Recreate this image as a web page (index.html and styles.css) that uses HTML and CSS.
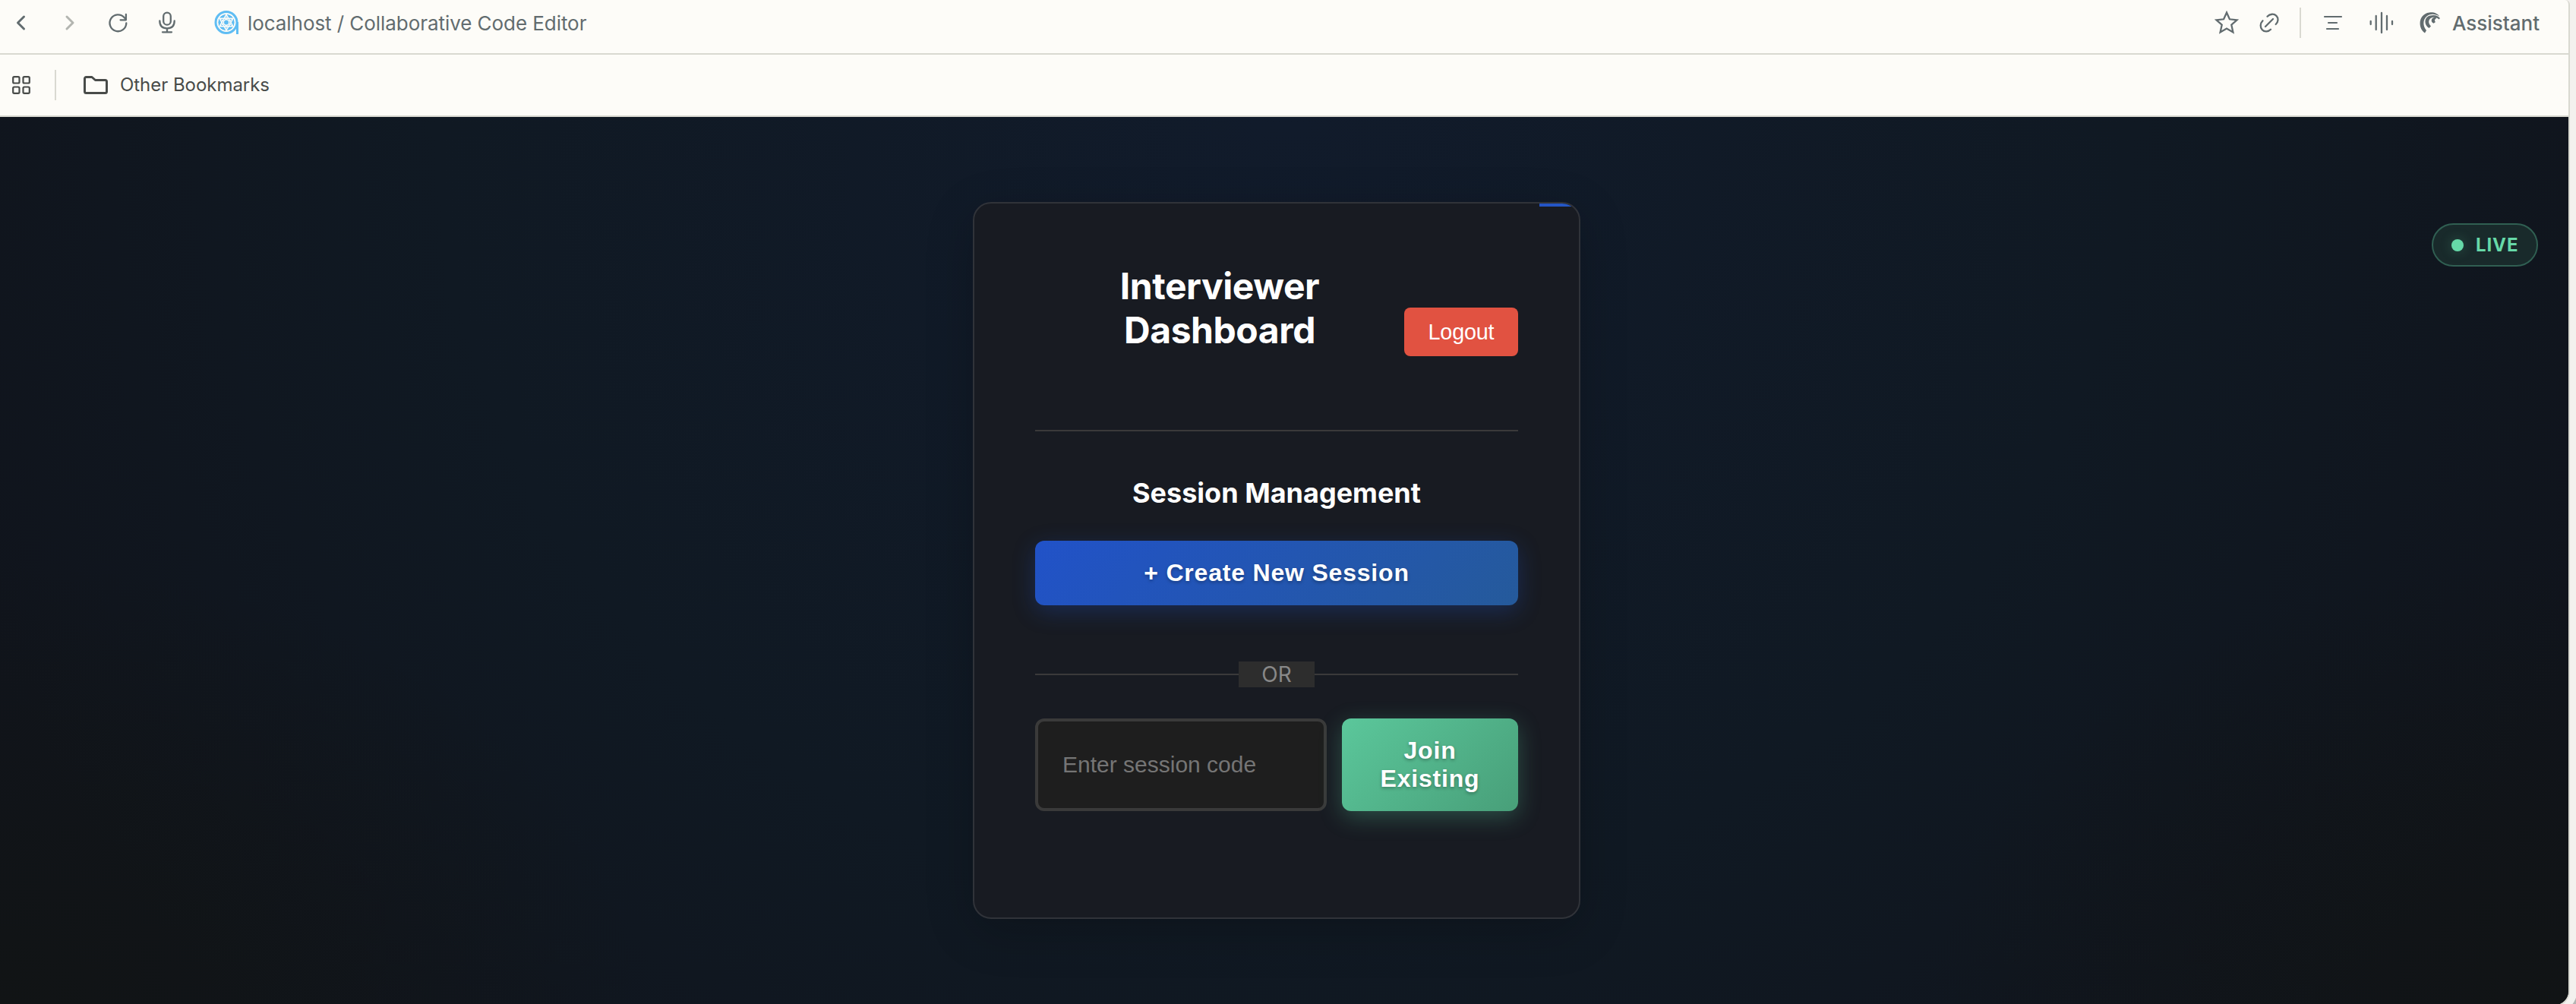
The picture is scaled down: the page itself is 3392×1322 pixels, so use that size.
FILE: index.html
```html
<!DOCTYPE html>
<html lang="en">
<head>
<meta charset="utf-8">
<title>Collaborative Code Editor</title>
<link rel="stylesheet" href="styles.css">
</head>
<body>
<div class="shell">
  <div class="window">
    <header class="toolbar">
      <nav class="nav">
        <svg class="icon" width="32" height="32" viewBox="0 0 32 32"><path d="M21.500 8 13.500 16 21.500 24" stroke-width="3"/></svg>
        <svg class="icon faded" width="32" height="32" viewBox="0 0 32 32"><path d="M14 8 22 16 14 24" stroke-width="3"/></svg>
        <svg class="icon" width="32" height="32" viewBox="0 0 32 32"><path d="M28.300 16.500A10.900 10.900 0 1 1 25.500 9L27.500 11M27.900 5V12.300H20.600" stroke-width="2.300"/></svg>
        <svg class="icon" width="32" height="32" viewBox="0 0 32 32"><rect x="13.200" y="2.700" width="9.600" height="16" rx="4.800" stroke-width="2.300"/><path d="M8.300 13.500C8.300 20 12 23.300 18 23.300S27.700 20 27.700 13.500M18 23.300V28M12 28.300H24" stroke-width="2.300"/></svg>
      </nav>
      <div class="address">
        <svg class="favicon" width="34" height="34" viewBox="0 0 34 34">
          <circle cx="16" cy="16.500" r="14" fill="none" stroke="#5fbdf3" stroke-width="3"/>
          <path d="M30.500 16V32" stroke="#5fbdf3" stroke-width="3"/>
          <circle cx="16" cy="16.500" r="10.800" fill="#5fbdf3"/>
          <g fill="none" stroke="#fdfcf8" stroke-width="1.500">
            <path d="M16 6 25 21.700H7ZM16 27 7 11.300H25Z"/>
            <circle cx="16" cy="16.500" r="3.700"/>
            <circle cx="16" cy="16.500" r="11.300" stroke-width="1"/>
            <path d="M16 6V12M16 21V27M7 11.300 12 14.500M20 18.500 25 21.700M7 21.700 12 18.500M20 14.500 25 11.300" stroke-width="1"/>
          </g>
        </svg>
        <span class="address-text">localhost / Collaborative Code Editor</span>
      </div>
      <div class="tools">
        <svg class="icon" width="34" height="34" viewBox="0 0 34 34"><path d="M17 3.500 20.900 12.300 30.500 13.300 23.300 19.700 25.400 29.400 17 24.500 8.600 29.400 10.700 19.700 3.500 13.300 13.100 12.300Z" stroke-width="2.300" stroke-linejoin="miter"/></svg>
        <svg class="icon link" width="26" height="26" viewBox="0 0 26 26"><path d="M10.500 4.700C14 .9 19.500.9 22.500 3.800S25.100 12 21.700 15M4.500 10.300C.9 14 .9 19 3.800 22.200S12 25 15 21.800M8 18 18 8" stroke-width="2.300"/></svg>
        <span class="rule"></span>
        <svg class="icon lines" width="26" height="20" viewBox="0 0 26 20"><path d="M2 2H24M7 10H18M5 18H20" stroke-width="2.200"/></svg>
        <svg class="icon wave" width="32" height="30" viewBox="0 0 32 30"><path d="M1.700 13V17M8.700 6V24M16 2V28M23 6V24M30 13V17" stroke-width="2.300"/></svg>
        <span class="assistant">
          <svg class="swirl" width="30" height="30" viewBox="0 0 30 30"><path d="M8 28.500C-2 22 -.5 3 14 1.500 20 .8 25 3 27 6.500 22 3.500 16 2.500 11 6 5 10.500 5 19 10 25Z"/><path d="M13.500 22C6.500 18 6.500 7.500 15 5.500 20 4.400 25 5 28 9L26.500 10.500C23 7 18 7 15 9.500 12 12.500 13 16.500 16 19.500Z"/><path d="M19.500 15.800C14.800 13.500 16.500 8 21.500 7.700L23.500 8.500 21.500 10.500C20.500 11.700 21 13 22 14Z"/></svg>
          <span>Assistant</span>
        </span>
      </div>
    </header>
    <div class="bookmarks">
      <svg class="icon dark" width="24" height="24" viewBox="0 0 24 24"><g stroke-width="2.200"><rect x="1.200" y="1.200" width="8.300" height="8.300" rx="1.500"/><rect x="14.500" y="1.200" width="8.300" height="8.300" rx="1.500"/><rect x="1.200" y="14.500" width="8.300" height="8.300" rx="1.500"/><rect x="14.500" y="14.500" width="8.300" height="8.300" rx="1.500"/></g></svg>
      <span class="rule"></span>
      <svg class="icon dark" width="32" height="24" viewBox="0 0 32 24"><path d="M1.500 3.500A2 2 0 0 1 3.500 1.500H11L15.500 5.500H28.500A2 2 0 0 1 30.500 7.500V20.500A2 2 0 0 1 28.500 22.500H3.500A2 2 0 0 1 1.500 20.500Z" stroke-width="3"/></svg>
      <span class="bookmark-label">Other Bookmarks</span>
    </div>
    <main class="page">
      <div class="live"><span class="live-dot"></span><span>LIVE</span></div>
      <section class="card">
        <div class="card-head">
          <h1>Interviewer Dashboard</h1>
          <button class="logout">Logout</button>
        </div>
        <h2>Session Management</h2>
        <button class="btn create">+ Create New Session</button>
        <div class="or"><span>OR</span></div>
        <div class="join-row">
          <input class="code" type="text" placeholder="Enter session code">
          <button class="btn join">Join Existing</button>
        </div>
      </section>
    </main>
  </div>
</div>
</body>
</html>
```
FILE: styles.css
```css
* { box-sizing: border-box; }
html, body { margin: 0; height: 1322px; overflow: hidden; }
body { background: #b5b5b3; font-family: Inter, "Liberation Sans", sans-serif; }
button, input { font-family: "Liberation Sans", Arial, sans-serif; border: 0; margin: 0; }

.shell {
  width: 3393px;
  height: 1332px;
  background: #f3f1ee;
  border-radius: 0 0 26px 0;
}
.window {
  display: flex;
  flex-direction: column;
  width: 3384px;
  height: 1325px;
  background: #fdfcf8;
  border-right: 2px solid #d9d9d1;
  border-bottom: 2px solid #d9d9d1;
  border-radius: 0 6px 20px 0;
  overflow: hidden;
}

.icon { display: block; fill: none; stroke: #626c6f; stroke-linecap: round; stroke-linejoin: round; flex: none; }
.icon.faded { stroke: #b3b5b0; }
.icon.dark { stroke: #484b49; }
.rule { width: 2px; height: 40px; background: #d9d9d1; flex: none; }

.toolbar {
  display: flex;
  align-items: center;
  height: 72px;
  padding: 0 38px 10px 10px;
  border-bottom: 2px solid #d9d9d1;
  color: #626c6f;
  font-size: 26px;
  line-height: 32px;
}
.nav { display: flex; gap: 32px; }
.address { display: flex; align-items: center; gap: 10px; margin-left: 48px; }
.favicon { display: block; }
.address-text { padding-top: 1px; letter-spacing: -0.06px; }
.tools { display: flex; align-items: center; margin-left: auto; }
.link { margin-left: 26px; }
.tools .rule { margin-left: 27px; }
.lines { margin-left: 29px; }
.wave { margin-left: 35px; }
.assistant { display: flex; align-items: center; gap: 14px; margin-left: 33px; font-weight: 500; }
.assistant span { padding-top: 1px; }
.swirl { display: block; fill: #626c6f; }

.bookmarks {
  display: flex;
  align-items: center;
  height: 82px;
  padding-left: 16px;
  border-bottom: 2px solid #d9d9d1;
  color: #484b49;
  font-size: 24px;
  line-height: 30px;
}
.bookmarks .rule { margin: 0 36px 0 32px; }
.bookmark-label { margin: -1px 0 0 16px; letter-spacing: -0.04px; }

.page {
  position: relative;
  flex: 1;
  display: flex;
  justify-content: center;
  align-items: flex-start;
  padding: 112px 20px 0 0;
  background:
    radial-gradient(ellipse 25% 50% at 0% 100%, #111415 0%, rgba(17, 20, 21, 0) 100%),
    radial-gradient(ellipse 25% 50% at 100% 100%, #111415 0%, rgba(17, 20, 21, 0) 100%),
    radial-gradient(ellipse 55% 150% at 50% 0%, #111b2b 0%, #101923 60%, #10141c 100%);
}
.live {
  position: absolute;
  top: 140px;
  right: 40px;
  display: flex;
  align-items: center;
  gap: 16px;
  width: 140px;
  height: 57px;
  padding-left: 24px;
  border: 2px solid #305f52;
  border-radius: 29px;
  background: #192a2b;
  color: #66d9a8;
  font-size: 24px;
  font-weight: 700;
  letter-spacing: 0.9px;
}
.live-dot { width: 16px; height: 16px; border-radius: 50%; background: #66d9a8; box-shadow: 0 0 16px rgba(102, 217, 168, 0.25); }

.card {
  position: relative;
  width: 800px;
  height: 944px;
  padding: 80px;
  border: 2px solid #303339;
  border-radius: 24px;
  background: #181b22;
  box-shadow: 0 16px 64px rgba(0, 0, 0, 0.2);
  overflow: hidden;
  color: #fff;
  text-align: center;
}
.card::before {
  content: "";
  position: absolute;
  top: 0;
  right: 0;
  width: 52px;
  height: 4px;
  background: linear-gradient(90deg, #2453c4, #2559c6);
}
.card-head {
  display: flex;
  justify-content: space-between;
  align-items: center;
  height: 220px;
  padding-bottom: 40px;
  border-bottom: 2px solid #3a3a3a;
}
h1 { flex: 1; margin: 0 0 62px; padding: 0 90px; font-size: 48px; font-weight: 700; line-height: 58px; letter-spacing: -0.45px; }
.logout {
  width: 150px;
  height: 64px;
  border-radius: 8px;
  background: #e15241;
  color: #fff;
  font-size: 28.8px;
  letter-spacing: -0.2px;
}
h2 { margin: 59px 0 41px; font-size: 36px; font-weight: 700; line-height: 44px; }
.btn {
  color: #fff;
  border-radius: 12px;
  font-size: 32px;
  font-weight: 700;
  line-height: 37px;
  letter-spacing: 0.8px;
  text-shadow: 0 2px 4px rgba(0, 0, 0, 0.3);
}
.create {
  display: block;
  width: 100%;
  height: 85px;
  background: linear-gradient(135deg, #2152c8 0%, #255a9b 100%);
  box-shadow: 0 8px 30px rgba(33, 82, 200, 0.3);
}
.or {
  display: flex;
  align-items: center;
  margin: 74px 0 41px;
  color: #888;
  font-size: 28px;
  line-height: 34px;
}
.or::before, .or::after { content: ""; flex: 1; height: 2px; background: #3a3a3a; }
.or span { width: 100px; background: #2d2d2d; }
.join-row { display: flex; gap: 20px; height: 122px; }
.code {
  width: 384px;
  padding: 0 32px;
  border: 4px solid #3a3a3a;
  border-radius: 12px;
  background: #1e1e1e;
  font-size: 30px;
}
.code::placeholder { color: #757575; opacity: 1; }
.join {
  width: 232px;
  padding: 24px 48px;
  background: linear-gradient(135deg, #5bc79b 0%, #489f79 100%);
  box-shadow: 0 8px 30px rgba(91, 199, 155, 0.3);
}
```
